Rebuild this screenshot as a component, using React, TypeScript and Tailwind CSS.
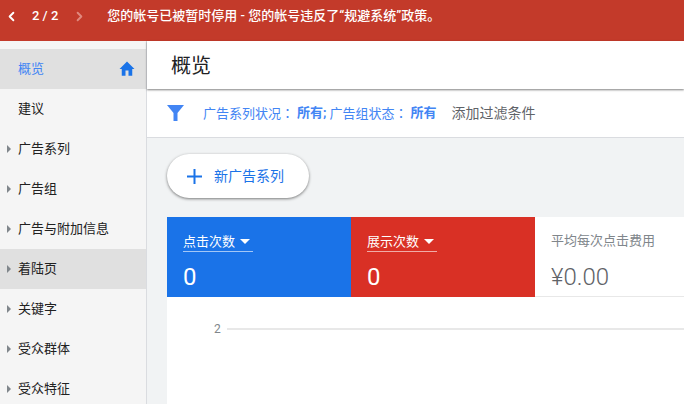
import { ChevronLeft, ChevronRight } from "lucide-react";

const font = "[font-family:Roboto,'Noto_Sans_CJK_SC',sans-serif]";

const navItems = [
  { label: "概览", active: true },
  { label: "建议" },
  { label: "广告系列", arrow: true },
  { label: "广告组", arrow: true },
  { label: "广告与附加信息", arrow: true },
  { label: "着陆页", arrow: true, hover: true },
  { label: "关键字", arrow: true },
  { label: "受众群体", arrow: true },
  { label: "受众特征", arrow: true },
];

const NavRow = ({ label, active, arrow, hover }: { label: string; active?: boolean; arrow?: boolean; hover?: boolean }) => (
  <div className={`relative flex h-10 shrink-0 items-center pl-[18px] pr-[10px] text-[13px] ${active ? "bg-[#e0e0e0] text-[#4285f4]" : "text-[#212121]"} ${hover ? "bg-[#e0e0e0]" : ""}`}>
    {arrow && <span className="absolute left-[7px] top-[16px] h-0 w-0 border-y-[4px] border-l-[4px] border-y-transparent border-l-[#80868b]" />}
    <span className="-mt-[1px] flex-1">{label}</span>
    {active && (
      <svg width="18" height="18" viewBox="0 0 24 24" fill="#1a73e8">
        <path d="M10 21v-7h4v7h5v-9h3L12 2 2 12h3v9z" />
      </svg>
    )}
  </div>
);

const Metric = ({ label, value, color }: { label: string; value: string; color: string }) => (
  <div className={`flex h-20 w-[184px] shrink-0 flex-col pl-4 pt-[15px] text-white ${color}`}>
    <div className="flex h-[20px] w-[70px] items-center border-b border-[#ffffff99] text-[13px] leading-[18px]">
      <span>{label}</span>
      <span className="ml-[5px] h-0 w-0 border-x-[5px] border-t-[5px] border-x-transparent border-t-white" />
    </div>
    <div className="mt-[10px] text-[24px] leading-[30px]">{value}</div>
  </div>
);

const Colon = () => <span className="[font-family:'Noto_Sans_CJK_TC',sans-serif]">：</span>;

export default function App() {
  return (
    <div className={`flex h-[404px] w-[684px] flex-col overflow-hidden bg-white ${font}`}>
      <div className="flex h-[41px] shrink-0 items-center bg-[#c33a2a] pb-[9px] text-white">
        <ChevronLeft size={15} strokeWidth={3} className="ml-[4px]" />
        <span className="ml-[13px] text-[13px] font-medium">2 / 2</span>
        <ChevronRight size={15} strokeWidth={3} className="ml-[14px] text-[#e0897e]" />
        <span className="ml-[20px] text-[13px] font-medium">您的帐号已被暂时停用 - 您的帐号违反了“规避系统”政策。</span>
      </div>
      <div className="flex min-h-0 flex-1">
        <div className="flex w-[147px] shrink-0 flex-col border-r border-[#dadce0] bg-[#f5f5f5] pt-[8px]">
          {navItems.map((item) => (
            <NavRow key={item.label} {...item} />
          ))}
        </div>
        <div className="flex min-w-0 flex-1 flex-col bg-[#f1f3f4]">
          <div className="relative z-10 flex h-[48px] shrink-0 items-center bg-white pl-6 pt-[2px] text-[20px] text-[#202124] shadow-[0_1px_2px_rgba(0,0,0,0.5)]">
            概览
          </div>
          <div className="flex h-[49px] shrink-0 items-center border-b border-[#dadce0] bg-white pl-[20px] text-[13px]">
            <svg width="18" height="18" viewBox="0 0 18 18" fill="#4285f4">
              <path d="M0 1h17l-6.5 8v8h-4V9z" />
            </svg>
            <span className="ml-[18px] text-[#4285f4]">广告系列状况<Colon /></span>
            <span className="ml-[3px] font-bold text-[#4285f4]">所有;</span>
            <span className="ml-[3px] text-[#4285f4]">广告组状态<Colon /></span>
            <span className="ml-[3px] font-bold text-[#4285f4]">所有</span>
            <span className="ml-[15px] text-[14px] text-[#5f6368]">添加过滤条件</span>
          </div>
          <div className="flex flex-1 flex-col pl-5 pt-4">
            <div className="flex h-[44px] w-[142px] items-center rounded-full bg-white pl-[20px] text-[14px] text-[#1a73e8] shadow-[0_1px_3px_rgba(0,0,0,0.5)]">
              <svg width="15" height="15" viewBox="0 0 15 15" fill="#1a73e8">
                <path d="M6.5 0h2v6.5H15v2H8.5V15h-2V8.5H0v-2h6.5z" />
              </svg>
              <span className="ml-[12px]">新广告系列</span>
            </div>
            <div className="mt-[19px] flex-1 bg-white">
              <div className="flex h-20">
                <Metric label="点击次数" value="0" color="bg-[#1a73e8]" />
                <Metric label="展示次数" value="0" color="bg-[#d93025]" />
                <div className="flex h-20 flex-1 flex-col border-b border-[#e8e8e8] pl-4 pt-[15px]">
                  <div className="text-[13px] leading-[18px] text-[#80868b]">平均每次点击费用</div>
                  <div className="mt-[12px] text-[24px] font-light leading-[30px] text-[#5f6368]">¥0.00</div>
                </div>
              </div>
              <div className="mt-[24px] flex items-center pl-[47px]">
                <span className="text-[12px] leading-[16px] text-[#80868b]">2</span>
                <div className="ml-[6px] h-[2px] flex-1 bg-[#e8e8e8]" />
              </div>
            </div>
          </div>
        </div>
      </div>
    </div>
  );
}
